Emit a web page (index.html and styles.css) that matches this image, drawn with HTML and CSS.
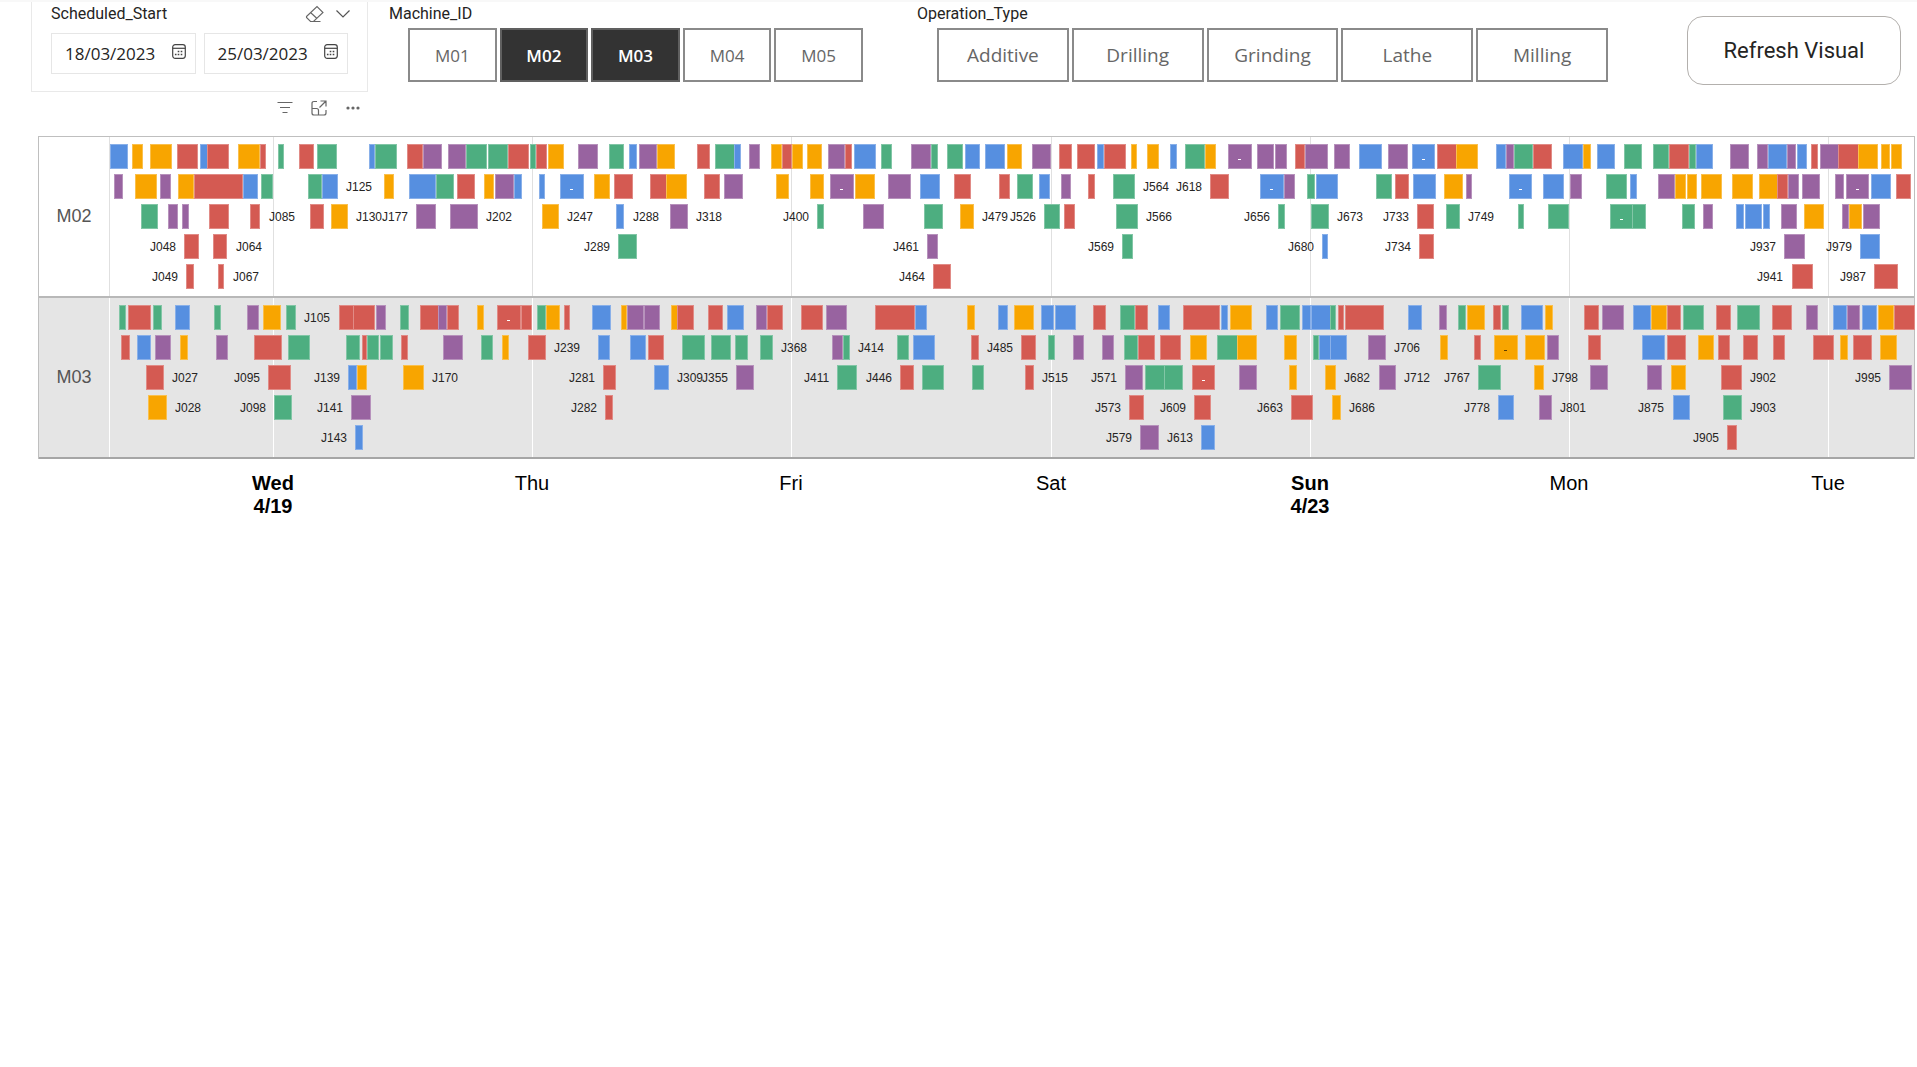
FILE: index.html
```html
<!DOCTYPE html>
<html lang="en">
<head>
<meta charset="utf-8">
<title>Machine schedule</title>
<meta name="viewport" content="width=device-width, initial-scale=1">
<link rel="stylesheet" href="styles.css">
</head>
<body>
<header class="filters">
  <section class="date-column">
    <div class="date-card">
      <div class="date-head">
        <h2 class="slicer-title">Scheduled_Start</h2>
        <button class="icon-button" type="button" aria-label="Clear selections">
          <svg width="20" height="18" viewBox="0 0 20 18" fill="none" stroke="#666" stroke-width="1.1"><path d="M1.500 11.500 12 1.500l6 6L8.500 16.500H5.500L1.500 12.500zM5.500 7.500l6.500 6M5 16.500h10.500"/></svg>
        </button>
        <button class="icon-button" type="button" aria-label="Expand">
          <svg width="16" height="18" viewBox="0 0 16 18" fill="none" stroke="#555" stroke-width="1.200"><path d="M1.500 5.500 8 12l6.500-6.500"/></svg>
        </button>
      </div>
      <div class="date-range">
        <div class="date-field">
          <input class="date-input" type="text" value="18/03/2023" aria-label="Start date">
          <button class="icon-button" type="button" aria-label="Open start date calendar">
            <svg width="14" height="15" viewBox="0 0 14 15" fill="none" stroke="#444" stroke-width="1.200"><rect x=".7" y=".7" width="12.600" height="13.600" rx="2.500"/><path d="M.7 4.300h12.600"/><path d="M5.700 7.500h1.600M8.700 7.500h1.600M2.900 10.500h1.600M5.700 10.500h1.600M8.700 10.500h1.600" stroke-width="1.500"/></svg>
          </button>
        </div>
        <div class="date-field">
          <input class="date-input" type="text" value="25/03/2023" aria-label="End date">
          <button class="icon-button" type="button" aria-label="Open end date calendar">
            <svg width="14" height="15" viewBox="0 0 14 15" fill="none" stroke="#444" stroke-width="1.200"><rect x=".7" y=".7" width="12.600" height="13.600" rx="2.500"/><path d="M.7 4.300h12.600"/><path d="M5.700 7.500h1.600M8.700 7.500h1.600M2.900 10.500h1.600M5.700 10.500h1.600M8.700 10.500h1.600" stroke-width="1.500"/></svg>
          </button>
        </div>
      </div>
    </div>
    <div class="visual-tools">
      <button class="icon-button" type="button" aria-label="Filters">
        <svg width="16" height="16" viewBox="0 0 16 16" fill="none" stroke="#666" stroke-width="1.200"><path d="M.5 2.500h15M3 7.500h10M5.500 12.500h5"/></svg>
      </button>
      <button class="icon-button" type="button" aria-label="Focus mode">
        <svg width="16" height="16" viewBox="0 0 16 16" fill="none" stroke="#666" stroke-width="1.200"><path d="M6 1.500H3Q1 1.500 1 3.500V13q0 2 2 2h10q2 0 2-2v-3M1 8.500h4.500q2 0 2 2V15M9.500 1h5.500v5.500M15 1 8.500 7.500"/></svg>
      </button>
      <button class="icon-button" type="button" aria-label="More options">
        <svg width="16" height="16" viewBox="0 0 16 16" fill="#666"><circle cx="3" cy="8" r="1.600"/><circle cx="8" cy="8" r="1.600"/><circle cx="13" cy="8" r="1.600"/></svg>
      </button>
    </div>
  </section>

  <section class="slicer slicer-machine">
    <h2 class="slicer-title">Machine_ID</h2>
    <div class="tiles">
      <button class="tile" type="button" aria-pressed="false">M01</button>
      <button class="tile tile-selected" type="button" aria-pressed="true">M02</button>
      <button class="tile tile-selected" type="button" aria-pressed="true">M03</button>
      <button class="tile" type="button" aria-pressed="false">M04</button>
      <button class="tile" type="button" aria-pressed="false">M05</button>
    </div>
  </section>

  <section class="slicer slicer-operation">
    <h2 class="slicer-title">Operation_Type</h2>
    <div class="tiles">
      <button class="tile" type="button" aria-pressed="false">Additive</button>
      <button class="tile" type="button" aria-pressed="false">Drilling</button>
      <button class="tile" type="button" aria-pressed="false">Grinding</button>
      <button class="tile" type="button" aria-pressed="false">Lathe</button>
      <button class="tile" type="button" aria-pressed="false">Milling</button>
    </div>
  </section>

  <button class="refresh" type="button">Refresh Visual</button>
</header>

<main class="timeline">
  <div class="groups" id="groups"></div>
  <div class="axis" id="axis"></div>
</main>
<script src="timeline.js"></script>
</body>
</html>
```
FILE: styles.css
```css
* {
  box-sizing: border-box;
}

body {
  margin: 0;
  background: #fff;
  color: #252423;
  font-family: "Open Sans", "Noto Sans", sans-serif;
}

button,
input {
  font: inherit;
  color: inherit;
}

.icon-button {
  display: flex;
  padding: 0;
  border: 0;
  background: none;
  cursor: pointer;
}

/* Filter bar */

.filters {
  display: grid;
  grid-template-columns: 337px minmax(0, 549fr) minmax(0, 770fr) 214px;
  align-items: start;
  padding: 0 16px 0 31px;
  border-top: 2px solid #f8f8f8;
}

.slicer-title {
  margin: 0;
  font: 400 16px/22px Roboto, sans-serif;
}

.date-card {
  padding: 0 19px 17px;
  border: 1px solid #e9e9e9;
  border-top: 0;
}

.date-head {
  display: flex;
  align-items: center;
  gap: 10px;
  height: 24px;
  margin-right: -3px;
}

.date-head .slicer-title {
  flex: 1;
}

.date-range {
  display: grid;
  grid-template-columns: repeat(2, minmax(0, 1fr));
  gap: 8px;
  margin-top: 7px;
}

.date-field {
  display: flex;
  align-items: center;
  height: 41px;
  padding: 0 9px 4px 13px;
  border: 1px solid #e6e6e6;
}

.date-input {
  flex: 1 1 0;
  width: 0;
  min-width: 0;
  height: 36px;
  margin-top: 4px;
  padding: 0;
  border: 0;
  outline: 0;
  background: none;
  font-size: 17px;
}

.visual-tools {
  display: flex;
  justify-content: flex-end;
  gap: 18px;
  height: 44px;
  padding: 8px 7px 0 0;
}

.slicer {
  padding-top: 1px;
}

.slicer-machine {
  padding-left: 21px;
  padding-right: 54px;
}

.slicer-operation {
  padding-right: 79px;
}

.tiles {
  display: flex;
  gap: 3px;
  margin-top: 3px;
  padding-left: 19px;
}

.slicer-operation .tiles {
  padding-left: 20px;
}

.tile {
  flex: 1 1 0;
  min-width: 0;
  height: 54px;
  padding: 0;
  border: 2px solid #8a8a8a;
  background: #fff;
  color: #666;
  font-size: 17px;
  cursor: pointer;
}

.slicer-operation .tile {
  font-size: 19px;
}

.tile-selected {
  border-color: #606060;
  background: #333;
  color: #fff;
  font-weight: 600;
}

.refresh {
  height: 69px;
  margin-top: 14px;
  border: 1px solid #b3b0ad;
  border-radius: 16px;
  background: #fff;
  font: 400 22px/24px Roboto, sans-serif;
  cursor: pointer;
}

/* Timeline */

.timeline {
  margin: 0 2px 0 38px;
  font-family: "Liberation Sans", Arial, sans-serif;
}

.groups {
  border: 1px solid #bfbfbf;
  border-bottom: 0;
}

.group {
  display: grid;
  grid-template-columns: 70px minmax(0, 1fr);
  border-bottom: 2px solid #b8b8b8;
}

.group-shaded {
  background: #e5e5e5;
  border-bottom-color: #a6a6a6;
}

.group-name {
  align-self: center;
  text-align: center;
  font-size: 18px;
  color: #555;
}

.plot {
  position: relative;
  display: grid;
  gap: 5px;
  padding: 7px 0;
}

.day-line {
  position: absolute;
  top: 0;
  bottom: 0;
  width: 1px;
  background: #e0e0e0;
}

.group-shaded .day-line {
  background: #fff;
}

.lane {
  position: relative;
  height: 25px;
}

.job {
  position: absolute;
  top: 0;
  bottom: 0;
  border: 1px solid rgba(255, 255, 255, 0.3);
}

.job-b { background: #568fe0; }
.job-o { background: #f8a500; }
.job-r { background: #d45a52; }
.job-g { background: #4dae80; }
.job-p { background: #9863a0; }

.job-clipped::after {
  content: "";
  display: block;
  width: 3px;
  height: 1px;
  margin: 14px auto 0;
  background: #fff;
}

.job-o.job-clipped::after {
  background: #5c3d00;
}

.job-label {
  position: absolute;
  top: 0;
  font-size: 12px;
  line-height: 26px;
  color: #252423;
}

.axis {
  position: relative;
  height: 60px;
  margin: 0 1px 0 71px;
}

.tick {
  position: absolute;
  top: 13px;
  transform: translateX(-50%);
  font-size: 20px;
  line-height: 23px;
  text-align: center;
  color: #000;
}

.tick-major {
  font-weight: 700;
}
```
FILE: timeline.js
```js
// Visible range of the time axis; every position below is on this scale.
const RANGE = { start: 109, end: 1914 };

const DAYS = [
  { at: 273, name: "Wed", date: "4/19" },
  { at: 532, name: "Thu" },
  { at: 791, name: "Fri" },
  { at: 1051, name: "Sat" },
  { at: 1310, name: "Sun", date: "4/23" },
  { at: 1569, name: "Mon" },
  { at: 1828, name: "Tue" }
];

// A job is <operation><from>-<to>, with * if its name is clipped to dots.
// A label is <job>@<position>.
const GROUPS = [
  {
    name: "M02",
    lanes: [
      "b110-128 o132-143 o150-172 r177-198 b200-208 r207-229 o238-260 r260-266 g278-284 r299-314 g317-337 b369-375 g375-397 r407-423 p423-442 p448-466 g466-487 g488-508 r508-529 g530-536 r536-547 o548-564 p578-598 g609-624 b629-637 p639-657 o657-675 r697-710 g715-735 b734-741 p749-760 o771-782 r782-792 o792-803 o807-822 p828-845 r845-852 b854-876 g881-892 p911-931 g931-938 g947-963 b965-980 b985-1005 o1007-1022 p1032-1051 r1059-1072 r1077-1095 b1097-1104 r1104-1126 o1131-1137 o1147-1159 b1170-1177 g1185-1205 o1205-1216 p1228-1252* p1257-1274 p1275-1287 r1295-1305 p1305-1328 p1334-1350 b1359-1382 p1388-1408 b1412-1435* r1437-1457 o1456-1478 b1496-1506 p1506-1514 g1514-1533 r1533-1552 b1563-1583 o1583-1591 b1597-1615 g1624-1642 g1653-1669 r1669-1689 g1689-1696 b1696-1713 p1730-1749 p1757-1768 b1768-1787 p1787-1796 b1797-1807 r1811-1818 p1820-1839 r1838-1859 o1858-1878 o1881-1890 o1891-1902",
      "p114-123 o135-157 p160-171 o178-194 r194-243 b243-258 g261-273 g308-322 b322-338 J125@346 o384-394 b409-436 g436-454 r457-475 o484-494 p495-514 b514-522 b539-545 b560-584* o594-610 r614-633 r650-667 o666-687 r704-720 p724-743 o776-789 o810-824 p830-854* o855-875 p888-911 b920-940 r954-971 r999-1010 g1017-1033 b1039-1050 p1061-1071 r1088-1095 g1113-1135 J564@1143 J618@1176 r1210-1229 b1260-1284* p1284-1295 g1307-1315 b1316-1338 g1376-1392 r1395-1409 b1413-1436 o1444-1463 p1466-1472 b1509-1532* b1543-1564 p1570-1582 g1606-1627 b1630-1637 p1658-1675 o1675-1686 o1687-1697 o1701-1722 o1732-1753 o1759-1778 r1777-1788 p1788-1799 p1802-1820 p1835-1844 p1846-1869* b1871-1891 r1896-1911",
      "g141-158 p168-178 p182-189 r209-229 r250-260 J085@269 r310-324 o331-348 J130@356 J177@382 p416-436 p450-478 J202@486 o542-559 J247@567 b616-624 J288@633 p670-688 J318@696 J400@783 g817-824 p863-884 g924-943 o960-974 J479@982 J526@1010 g1044-1060 r1064-1075 g1116-1138 J566@1146 J656@1244 g1278-1285 g1311-1329 J673@1337 J733@1383 r1417-1434 g1446-1460 J749@1468 g1518-1524 g1548-1569 g1610-1634* g1632-1646 g1682-1695 p1703-1713 b1736-1744 b1745-1762 b1763-1770 p1781-1797 o1804-1824 p1842-1849 o1849-1862 p1863-1880",
      "J048@150 r184-199 r213-227 J064@236 J289@584 g618-637 J461@893 p927-938 J569@1088 g1122-1133 J680@1288 b1322-1328 J734@1385 r1419-1434 J937@1750 p1784-1805 J979@1826 b1860-1880",
      "J049@152 r186-194 r218-224 J067@233 J464@899 r933-951 J941@1757 r1792-1813 J987@1840 r1874-1898"
    ]
  },
  {
    name: "M03",
    shaded: true,
    lanes: [
      "g119-126 r128-151 g153-162 b175-190 g214-221 p247-259 o263-281 g286-296 J105@304 r339-354 r353-375 p376-386 g400-409 r420-439 p438-447 r447-459 o477-484 r497-521* r521-532 g537-546 o546-560 r564-570 b592-611 o621-627 p627-644 p644-660 o671-678 r677-694 r708-723 b727-744 p756-767 r767-783 r801-823 p826-847 r875-915 b915-927 o967-975 b998-1008 o1014-1034 b1041-1054 b1055-1076 r1093-1106 g1120-1135 r1135-1148 b1158-1170 r1183-1220 b1221-1228 o1230-1252 b1266-1278 g1280-1300 b1302-1311 b1311-1331 g1330-1336 r1338-1344 r1345-1384 b1408-1422 p1439-1447 g1458-1466 o1467-1485 r1493-1501 g1502-1509 b1521-1543 o1545-1553 r1584-1599 p1602-1624 b1633-1651 o1651-1667 r1667-1681 g1683-1704 r1716-1731 g1737-1760 r1772-1792 p1806-1818 b1833-1847 p1847-1860 b1862-1877 o1878-1894 r1894-1915",
      "r121-130 b137-151 p155-171 o180-188 p216-228 r254-282 g288-310 g346-360 r362-367 g367-379 g380-393 r401-408 p443-463 g481-493 o502-509 r528-546 J239@554 b598-610 b630-646 r648-664 g682-705 g711-731 g735-748 g760-773 J368@781 p832-843 g843-850 J414@858 g897-909 b913-935 r971-979 J485@987 r1021-1036 g1048-1055 p1073-1084 p1102-1114 g1124-1138 r1138-1155 r1160-1181 o1190-1207 g1217-1238 o1237-1257 o1284-1297 g1313-1319 b1319-1331 b1330-1347 p1368-1386 J706@1394 o1440-1448 r1474-1481 o1494-1518* o1525-1545 p1547-1559 r1588-1601 b1642-1665 r1667-1686 o1698-1714 r1718-1730 r1743-1758 r1773-1785 r1813-1834 o1840-1848 r1853-1872 o1880-1897",
      "r146-164 J027@172 J095@234 r268-291 J139@314 b348-357 o357-367 o403-424 J170@432 J281@569 r603-616 b654-669 J309@677 J355@702 p736-754 J411@804 g837-857 J446@866 r900-914 g922-944 g972-984 r1025-1034 J515@1042 J571@1091 p1125-1143 g1145-1165 g1164-1183 r1192-1215* p1239-1257 o1289-1297 o1325-1336 J682@1344 p1379-1396 J712@1404 J767@1444 g1478-1501 o1534-1544 J798@1552 p1590-1608 p1647-1662 o1671-1686 r1721-1742 J902@1750 J995@1855 p1889-1912",
      "o148-167 J028@175 J098@240 g274-292 J141@317 p351-371 J282@571 r605-613 J573@1095 r1129-1144 J609@1160 r1194-1211 J663@1257 r1291-1313 o1332-1341 J686@1349 J778@1464 b1498-1514 p1539-1552 J801@1560 J875@1638 b1673-1690 g1723-1742 J903@1750",
      "J143@321 b355-363 J579@1106 p1140-1159 J613@1167 b1201-1215 J905@1693 r1727-1737"
    ]
  }
];

const percent = (length) => (length / (RANGE.end - RANGE.start)) * 100 + "%";
const offset = (position) => percent(position - RANGE.start);

function element(className, text) {
  const node = document.createElement("div");
  node.className = className;
  if (text) node.textContent = text;
  return node;
}

function laneItem(token) {
  if (token.includes("@")) {
    const [name, at] = token.split("@");
    const label = element("job-label", name);
    label.style.left = offset(at);
    return label;
  }
  const [from, to] = token.slice(1).split("-").map(parseFloat);
  const job = element("job job-" + token[0] + (token.endsWith("*") ? " job-clipped" : ""));
  job.style.left = offset(from);
  job.style.width = percent(to - from);
  return job;
}

for (const group of GROUPS) {
  const row = element("group" + (group.shaded ? " group-shaded" : ""));
  const plot = element("plot");
  for (const at of [RANGE.start, ...DAYS.map((day) => day.at)]) {
    const line = element("day-line");
    line.style.left = offset(at);
    plot.append(line);
  }
  for (const tokens of group.lanes) {
    const lane = element("lane");
    lane.append(...tokens.split(" ").map(laneItem));
    plot.append(lane);
  }
  row.append(element("group-name", group.name), plot);
  document.getElementById("groups").append(row);
}

for (const day of DAYS) {
  const tick = element("tick" + (day.date ? " tick-major" : ""));
  tick.append(element("tick-name", day.name));
  if (day.date) tick.append(element("tick-date", day.date));
  tick.style.left = offset(day.at);
  document.getElementById("axis").append(tick);
}
```
